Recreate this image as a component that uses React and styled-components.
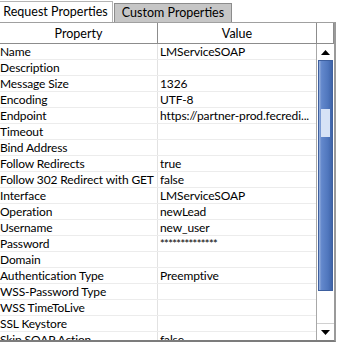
import React from "react"
import styled, { createGlobalStyle } from "styled-components"

const GlobalStyle = createGlobalStyle`
  body {
    margin: 0;
    background: #fff;
    font-family: Lato, "Noto Sans", sans-serif;
    font-size: 12px;
    color: #000;
  }
`

const rows = [
  ["Name", "LMServiceSOAP"],
  ["Description", ""],
  ["Message Size", "1326"],
  ["Encoding", "UTF-8"],
  ["Endpoint", "https://partner-prod.fecredi..."],
  ["Timeout", ""],
  ["Bind Address", ""],
  ["Follow Redirects", "true"],
  ["Follow 302 Redirect with GET", "false"],
  ["Interface", "LMServiceSOAP"],
  ["Operation", "newLead"],
  ["Username", "new_user"],
  ["Password", "**************"],
  ["Domain", ""],
  ["Authentication Type", "Preemptive"],
  ["WSS-Password Type", ""],
  ["WSS TimeToLive", ""],
  ["SSL Keystore", ""],
  ["Skip SOAP Action", "false"],
]

const Panel = styled.div`
  width: 339px;
  height: 342px;
  overflow: hidden;
  display: flex;
  flex-direction: column;
`

const TabStrip = styled.div`
  display: flex;
  align-items: flex-end;
  height: 22px;
`

const Tab = styled.div`
  box-sizing: border-box;
  height: ${p => (p.active ? "21px" : "19px")};
  width: ${p => p.w}px;
  margin-left: ${p => (p.active ? "-2px" : "1px")};
  padding-top: 1px;
  background: ${p => (p.active ? "#fff" : "#c6c6c6")};
  border: 1px solid ${p => (p.active ? "#b4b4b4" : "#8c8c8c")};
  border-bottom: none;
  display: flex;
  align-items: center;
  justify-content: center;
  line-height: 1;
  font-size: 12.5px;
`

const Frame = styled.div`
  width: 336px;
  flex: 1;
  box-sizing: border-box;
  border-top: 1px solid #a0a0a0;
  border-right: 2px solid #9a9a9a;
  border-bottom: 2px solid #7c7c7c;
  display: flex;
  flex-direction: column;
  overflow: hidden;
`

const HeaderRow = styled.div`
  display: flex;
  height: 20px;
  border-bottom: 1px solid #8c8c8c;
`

const HeaderCell = styled.div`
  box-sizing: border-box;
  width: ${p => p.w}px;
  border-right: 1px solid #8c8c8c;
  display: flex;
  align-items: center;
  justify-content: center;
  padding-top: 1px;
  font-size: 12.5px;
`

const Body = styled.div`
  flex: 1;
  display: flex;
  overflow: hidden;
`

const Rows = styled.div`
  width: 317px;
  border-right: 1px solid #a8a8a8;
  box-sizing: border-box;
  overflow: hidden;
`

const Row = styled.div`
  display: grid;
  grid-template-columns: 158px 1fr;
  height: 16px;
  box-sizing: border-box;
  border-bottom: 1px solid #ececec;
`

const Cell = styled.div`
  padding-left: ${p => p.pad}px;
  border-right: ${p => (p.divider ? "1px solid #e2e2e2" : "none")};
  white-space: nowrap;
  overflow: hidden;
  line-height: 16px;
  letter-spacing: ${p => (p.secret ? "-0.6px" : "-0.12px")};
  font-size: ${p => (p.secret ? "11px" : "12px")};
`

const ScrollBar = styled.div`
  width: 17px;
  display: flex;
  flex-direction: column;
  background: #fff;
`

const ArrowButton = styled.div`
  height: 16px;
  display: flex;
  align-items: center;
  justify-content: center;
  border-top: ${p => (p.down ? "1px solid #d0d0d0" : "none")};
`

const Thumb = styled.div`
  height: 231px;
  margin: 0 1px;
  background: linear-gradient(to right, #9bb4e0 0%, #6388cc 20%, #4f76bd 70%, #3f64a8 100%);
  border: 1px solid #3d5f9f;
  box-sizing: border-box;
  display: flex;
  align-items: flex-start;
  justify-content: center;
  padding-top: 48px;
`

const Grip = styled.div`
  width: 9px;
  height: 28px;
  background-image: radial-gradient(circle, #d6e2f6 0.8px, transparent 1px);
  background-size: 2px 2px;
`

const Track = styled.div`
  flex: 1;
  background: #fff;
`

const Arrow = ({ down }) => (
  <svg width="9" height="5" viewBox="0 0 9 5">
    <path d={down ? "M0 0h9L4.5 5z" : "M4.5 0L9 5H0z"} fill="#000" />
  </svg>
)

export default function App() {
  return (
    <>
      <GlobalStyle />
      <Panel>
        <TabStrip>
          <Tab active w={115}>Request Properties</Tab>
          <Tab w={118}>Custom Properties</Tab>
        </TabStrip>
        <Frame>
          <HeaderRow>
            <HeaderCell w={158}>Property</HeaderCell>
            <HeaderCell w={159}>Value</HeaderCell>
            <HeaderCell w={17} />
          </HeaderRow>
          <Body>
            <Rows>
              {rows.map(([k, v]) => (
                <Row key={k}>
                  <Cell pad={0} divider>{k}</Cell>
                  <Cell pad={2} secret={k === "Password"}>{v}</Cell>
                </Row>
              ))}
            </Rows>
            <ScrollBar>
              <ArrowButton><Arrow /></ArrowButton>
              <Thumb><Grip /></Thumb>
              <Track />
              <ArrowButton down><Arrow down /></ArrowButton>
            </ScrollBar>
          </Body>
        </Frame>
      </Panel>
    </>
  )
}
